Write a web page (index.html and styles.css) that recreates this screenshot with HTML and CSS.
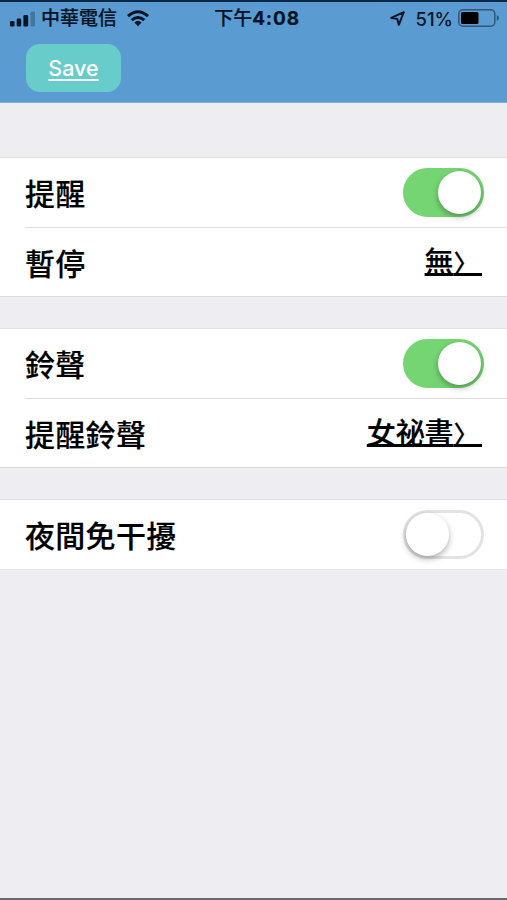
FILE: index.html
```html
<!DOCTYPE html>
<html lang="zh-Hant">
<head>
<meta charset="utf-8">
<meta name="viewport" content="width=device-width, initial-scale=1">
<title>提醒</title>
<link rel="stylesheet" href="styles.css">
</head>
<body>
<header class="header">
  <div class="status">
    <div class="status-left">
      <svg class="signal" width="25" height="16" viewBox="0 0 25 16"><rect x="0" y="10" width="4.5" height="5.5" rx="1.3"/><rect x="6.7" y="7.5" width="4.5" height="8" rx="1.3"/><rect x="13.4" y="4" width="4.8" height="11.5" rx="1.3"/><rect x="20.5" y="0.5" width="4.5" height="15" rx="1.3" opacity=".28"/></svg>
      <span class="carrier">中華電信</span>
      <svg class="wifi" width="22" height="17" viewBox="0 0 22 17"><g fill="none" stroke="#061525" stroke-width="2.9"><path d="M1 6.1Q11-2.7 21 6.1"/><path d="M4.7 10.2Q11 4.6 17.3 10.2"/></g><path d="M7.4 12.4Q11 9.3 14.6 12.4L11 16.2Z"/></svg>
    </div>
    <div class="time">下午<b>4:08</b></div>
    <div class="status-right">
      <svg class="location" width="15" height="15" viewBox="0 0 15 15"><path d="M1.2 6.9L13.8 1.2L8.8 13.8L7.2 7.7Z" fill="none" stroke="#061525" stroke-width="2" stroke-linejoin="round"/></svg>
      <span class="percent">51%</span>
      <svg class="battery" width="41" height="19" viewBox="0 0 41 19"><rect x=".8" y=".8" width="36" height="16.4" rx="4" fill="none" stroke="#061525" stroke-opacity=".5" stroke-width="1.5"/><rect x="3" y="3" width="17.5" height="12" rx="1.5" fill="#000"/><path d="M38.8 6Q41 7 41 9T38.8 12Z" opacity=".5"/></svg>
    </div>
  </div>
  <button class="save">Save</button>
</header>
<main>
  <section class="group">
    <div class="row"><span class="label">提醒</span><i class="switch on"></i></div>
    <div class="row"><span class="label">暫停</span><a class="value">無<span class="chevron">〉</span></a></div>
  </section>
  <section class="group">
    <div class="row"><span class="label">鈴聲</span><i class="switch on"></i></div>
    <div class="row"><span class="label">提醒鈴聲</span><a class="value">女祕書<span class="chevron">〉</span></a></div>
  </section>
  <section class="group last">
    <div class="row"><span class="label">夜間免干擾</span><i class="switch"></i></div>
  </section>
</main>
</body>
</html>
```
FILE: styles.css
```css
* { box-sizing: border-box; }
body {
  margin: 0;
  height: 900px;
  overflow: hidden;
  background: #ededf2;
  border-bottom: 2px solid #68686d;
  color: #000;
  font-family: Inter, "Noto Sans CJK TC", sans-serif;
}
.header {
  height: 103px;
  background: #5a9bd1;
  border-top: 2px solid #092644;
  border-bottom: 1px solid #7caed9;
}
.status {
  display: grid;
  grid-template-columns: 1fr auto 1fr;
  align-items: center;
  height: 32px;
  padding: 0 8px 0 10px;
  color: #061525;
  fill: #061525;
  font-size: 19px;
  line-height: 32px;
  white-space: nowrap;
}
.status-left, .status-right { display: flex; align-items: center; }
.status-right { justify-content: flex-end; }
.carrier { margin-left: 6px; padding-top: 1px; font-weight: 500; -webkit-text-stroke: .2px; }
.wifi { margin-left: 10px; }
.time { padding: 1px 0 0 5px; font-weight: 500; -webkit-text-stroke: .2px; }
.time b { font-size: 19px; font-weight: 700; letter-spacing: .8px; }
.location { margin-right: 11px; }
.percent { margin-right: 5px; font-size: 18.5px; font-weight: 500; }
.save {
  display: block;
  width: 95px;
  height: 48px;
  margin: 10px 0 0 26px;
  padding: 0 0 1px;
  border: 0;
  border-radius: 14px;
  background: #68cdca;
  color: #fff;
  font: 500 21.5px/46px Inter, sans-serif;
  text-decoration: underline;
  text-decoration-thickness: 2px;
  text-underline-offset: 3px;
}
.group {
  margin-top: 31px;
  border-top: 1px solid #dfdfe4;
  border-bottom: 1px solid #d8d8de;
  background: linear-gradient(#fff, #fff) padding-box;
}
.group:first-child { margin-top: 54px; }
.group.last { border-bottom-color: #e6e6ea; }
.row {
  display: flex;
  align-items: center;
  justify-content: space-between;
  height: 69px;
  margin-left: 25px;
  padding-right: 23px;
  font-size: 30px;
  font-weight: 500;
  line-height: 44px;
  letter-spacing: .3px;
  -webkit-text-stroke: .2px;
}
.row:first-child { padding-bottom: 1px; }
.row + .row { border-top: 1px solid #dddde0; }
.group.last .row { height: 69px; }
.label { padding-top: 3px; }
.value {
  margin-right: 2px;
  padding-top: 3px;
  font-size: 29px;
  letter-spacing: -.1px;
  text-decoration: underline;
  text-decoration-thickness: 2.5px;
  text-decoration-skip-ink: none;
  text-underline-offset: 0;
}
.chevron {
  font-size: 25px;
  letter-spacing: 3.5px;
}
.switch {
  display: flex;
  align-items: center;
  width: 81px;
  height: 49px;
  border: 3px solid #e3e3e3;
  border-radius: 25px;
}
.switch::before {
  content: "";
  width: 43px;
  height: 43px;
  border-radius: 50%;
  background: #fff;
  box-shadow: 0 3px 6px rgba(0, 0, 0, .3);
}
.switch.on {
  justify-content: flex-end;
  border-color: #74d572;
  background: #74d572;
}
```
